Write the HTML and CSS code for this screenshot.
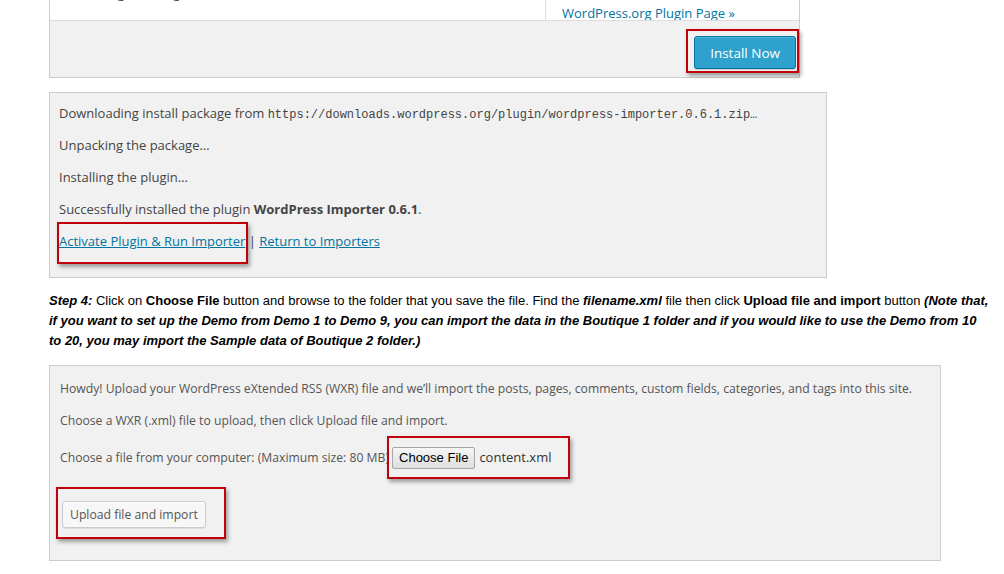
FILE: index.html
```html
<!DOCTYPE html>
<html lang="en">
<head>
<meta charset="utf-8">
<title>Import demo data</title>
<link rel="stylesheet" href="styles.css">
</head>
<body>
<div class="page">
  <div class="card card-plugin">
    <div class="plugin-top">
      <div class="plugin-desc">
        <ul>
          <li>categories, tags and terms from custom taxonomies</li>
          <li>and author information</li>
        </ul>
      </div>
      <div class="plugin-side">
        <a href="#" class="link">WordPress.org Plugin Page »</a>
      </div>
    </div>
    <div class="plugin-foot">
      <span class="hl hl-install"><button class="btn-primary">Install Now</button></span>
    </div>
  </div>

  <div class="card card-log">
    <p>Downloading install package from <code>https://downloads.wordpress.org/plugin/wordpress-importer.0.6.1.zip…</code></p>
    <p>Unpacking the package…</p>
    <p>Installing the plugin…</p>
    <p>Successfully installed the plugin <strong>WordPress Importer 0.6.1</strong>.</p>
    <p><span class="hl hl-activate"><a href="#" class="link ul">Activate Plugin &amp; Run Importer</a></span> | <a href="#" class="link ul">Return to Importers</a></p>
  </div>

  <p class="step"><b><i>Step 4:</i></b> Click on <b>Choose File</b> button and browse to the folder that you save the file. Find the <b><i>filename.xml</i></b> file then click <b>Upload file and import</b> button <b><i>(Note that, if you want to set up the Demo from Demo 1 to Demo 9, you can import the data in the Boutique 1 folder and if you would like to use the Demo from 10 to 20, you may import the Sample data of Boutique 2 folder.)</i></b></p>

  <div class="card card-import">
    <p>Howdy! Upload your WordPress eXtended RSS (WXR) file and we’ll import the posts, pages, comments, custom fields, categories, and tags into this site.</p>
    <p>Choose a WXR (.xml) file to upload, then click Upload file and import.</p>
    <div class="file-row">
      <span class="file-label">Choose a file from your computer: (Maximum size: 80 MB)</span>
      <span class="hl hl-file"><button class="choose">Choose File</button><span class="file-name">content.xml</span></span>
    </div>
    <div class="submit-row">
      <span class="hl hl-upload"><button class="btn-secondary">Upload file and import</button></span>
    </div>
  </div>
</div>
</body>
</html>
```

FILE: styles.css
```css
html, body {
  margin: 0;
  padding: 0;
  background: #ffffff;
}

.page {
  padding-left: 49px;
  font-family: "Open Sans", "Liberation Sans", sans-serif;
  font-size: 13px;
  color: #444444;
}

.card {
  box-sizing: border-box;
  border: 1px solid #cccccc;
}

.link {
  color: #0074a2;
  text-decoration: none;
}

.link.ul {
  text-decoration: underline;
}

/* Plugin card (cropped at the top) */
.card-plugin {
  width: 751px;
  border-top: none;
}

.plugin-top {
  display: flex;
  height: 20px;
  overflow: hidden;
  background: #ffffff;
}

.plugin-desc {
  width: 495px;
  flex: none;
}

.plugin-desc ul {
  margin: -16px 0 0 0;
  padding-left: 42px;
  line-height: 19.5px;
}

.plugin-desc li + li {
  margin-top: 14px;
}

.plugin-side {
  flex: 1;
  border-left: 1px solid #dddddd;
  padding: 4px 0 0 16px;
  line-height: 19.5px;
  background: #ffffff;
}

.plugin-foot {
  display: flex;
  justify-content: flex-end;
  align-items: flex-start;
  height: 57px;
  box-sizing: border-box;
  padding: 15px 3px 0 0;
  border-top: 1px solid #dddddd;
  background: #f1f1f1;
}

.btn-primary {
  display: block;
  height: 33px;
  padding: 0 15px;
  font-family: "Open Sans", "Liberation Sans", sans-serif;
  font-size: 13.5px;
  color: #ffffff;
  background: #2ea2cc;
  border: 1px solid #0074a2;
  border-radius: 3px;
  box-shadow: inset 0 1px 0 rgba(120, 200, 230, 0.5), 0 1px 0 rgba(0, 0, 0, 0.15);
}

/* Highlight boxes */
.hl {
  position: relative;
  display: inline-block;
}

.hl::after {
  content: "";
  position: absolute;
  border: 2px solid #c0000b;
  box-shadow: 2px 3px 4px rgba(0, 0, 0, 0.35);
  pointer-events: none;
}

.hl-install::after {
  left: -8px;
  top: -7px;
  right: -3px;
  bottom: -4px;
}

.hl-activate::after {
  left: -2px;
  top: -9px;
  right: -3px;
  bottom: -13px;
}

.hl-file::after {
  left: -5px;
  top: -11px;
  right: -18px;
  bottom: -10px;
}

.hl-upload::after {
  left: -6px;
  top: -14px;
  right: -20px;
  bottom: -11px;
}

/* Install log card */
.card-log {
  width: 778px;
  margin-top: 14px;
  padding: 10px 10px 14px 9px;
  background: #f1f1f1;
  line-height: 20px;
}

.card-log p {
  margin: 0 0 12px;
}

.card-log code {
  font-family: "Liberation Mono", monospace;
  font-size: 12px;
  line-height: 1;
}

.card-log strong {
  font-weight: 700;
}

/* Step text */
.step {
  width: 943px;
  margin: 13px 0 14px;
  font-family: "Liberation Sans", Arial, sans-serif;
  font-size: 13px;
  line-height: 20px;
  color: #000000;
}

/* Importer card */
.card-import {
  width: 892px;
  height: 196px;
  padding: 13px 10px 11px;
  background: #f1f1f1;
  font-size: 12.2px;
  line-height: 20px;
  color: #555555;
}

.card-import p {
  margin: 0 0 12px;
}

.file-row {
  display: flex;
  align-items: center;
  height: 29px;
}

.file-label {
  margin-right: 3px;
}

.choose {
  height: 22px;
  padding: 0 6px;
  font-family: "Liberation Sans", Arial, sans-serif;
  font-size: 13px;
  color: #000000;
  background: linear-gradient(#f6f6f6, #dedede);
  border: 1px solid #a6a6a6;
  border-radius: 2px;
}

.file-name {
  margin-left: 4px;
  font-size: 13px;
  color: #333333;
}

.submit-row {
  margin-top: 29px;
  padding-left: 2px;
}

.btn-secondary {
  display: block;
  height: 27px;
  padding: 0 7px;
  font-family: "Open Sans", "Liberation Sans", sans-serif;
  font-size: 12.2px;
  color: #555555;
  background: #f7f7f7;
  border: 1px solid #cccccc;
  border-radius: 3px;
  box-shadow: inset 0 1px 0 #ffffff, 0 1px 0 rgba(0, 0, 0, 0.08);
}
```
